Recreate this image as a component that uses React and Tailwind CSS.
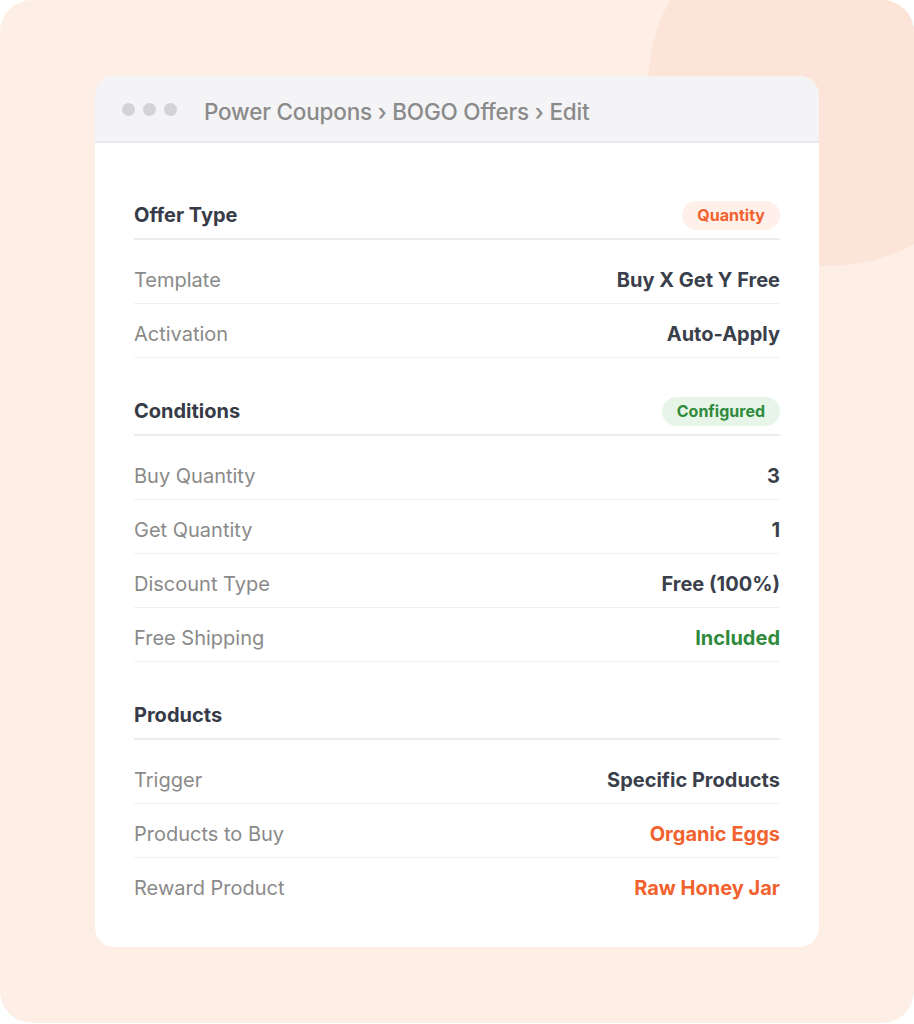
const sections = [
  {
    title: 'Offer Type',
    badge: { text: 'Quantity', tone: 'orange' },
    rows: [
      { label: 'Template', value: 'Buy X Get Y Free' },
      { label: 'Activation', value: 'Auto-Apply' },
    ],
  },
  {
    title: 'Conditions',
    badge: { text: 'Configured', tone: 'green' },
    rows: [
      { label: 'Buy Quantity', value: '3' },
      { label: 'Get Quantity', value: '1' },
      { label: 'Discount Type', value: 'Free (100%)' },
      { label: 'Free Shipping', value: 'Included', tone: 'green' },
    ],
  },
  {
    title: 'Products',
    rows: [
      { label: 'Trigger', value: 'Specific Products' },
      { label: 'Products to Buy', value: 'Organic Eggs', tone: 'orange' },
      { label: 'Reward Product', value: 'Raw Honey Jar', tone: 'orange' },
    ],
  },
];

const valueTone = {
  orange: 'text-[#f2622e]',
  green: 'text-[#2f8a3c]',
};

const badgeTone = {
  orange: 'bg-[#fff0ea] text-[#f2622e]',
  green: 'bg-[#e6f5e8] text-[#2f8a3c]',
};

const Section = ({ section, last }) => (
  <div className={last ? '' : 'mb-[38px]'}>
    <div className="flex items-center justify-between min-h-[29px] pb-[8px] border-b-2 border-[#ececef]">
      <h3 className="text-[20px] font-bold text-[#363b47]">{section.title}</h3>
      {section.badge && (
        <span
          className={`h-[29px] px-[15px] rounded-full flex items-center text-[16px] font-bold ${badgeTone[section.badge.tone]}`}
        >
          {section.badge.text}
        </span>
      )}
    </div>
    <div className="mt-[10px]">
      {section.rows.map((row, i) => {
        const isLast = last && i === section.rows.length - 1;
        return (
          <div
            key={row.label}
            className={`flex items-center justify-between h-[54px] pt-[6px] ${
              isLast ? '' : 'border-b border-[#f1f1f3]'
            }`}
          >
            <span className="text-[20px] text-[#8a8a8a]">{row.label}</span>
            <span className={`text-[20px] font-bold ${valueTone[row.tone] || 'text-[#3a3f4b]'}`}>
              {row.value}
            </span>
          </div>
        );
      })}
    </div>
  </div>
);

const App = () => {
  return (
    <div className="w-[914px] h-[1024px] bg-white" style={{ fontFamily: 'Inter, "Noto Sans", sans-serif' }}>
      <div className="relative w-[914px] h-[1023px] rounded-[32px] bg-[#fdeee6] overflow-hidden pt-[76px] pl-[95px]">
        <div className="absolute left-[648px] top-[-94px] w-[360px] h-[360px] rounded-full bg-[#fce4d9]" />
        <div className="relative w-[724px] h-[871px] bg-white rounded-[20px] overflow-hidden">
          <div className="h-[67px] bg-[#f4f4f6] border-b-2 border-[#e9e9ed] flex items-center pl-[27px]">
            <div className="flex gap-[8px] pt-[1px]">
              <span className="w-[13px] h-[13px] rounded-full bg-[#d2d2d7]" />
              <span className="w-[13px] h-[13px] rounded-full bg-[#d2d2d7]" />
              <span className="w-[13px] h-[13px] rounded-full bg-[#d2d2d7]" />
            </div>
            <span className="ml-[27px] pt-[6px] text-[22.5px] font-medium text-[#8a8a8a] tracking-[-0.2px]">
              Power Coupons › BOGO Offers › Edit
            </span>
          </div>
          <div className="px-[39px] pt-[57px]">
            {sections.map((s, i) => (
              <Section key={s.title} section={s} last={i === sections.length - 1} />
            ))}
          </div>
        </div>
      </div>
    </div>
  );
};

export default App;
